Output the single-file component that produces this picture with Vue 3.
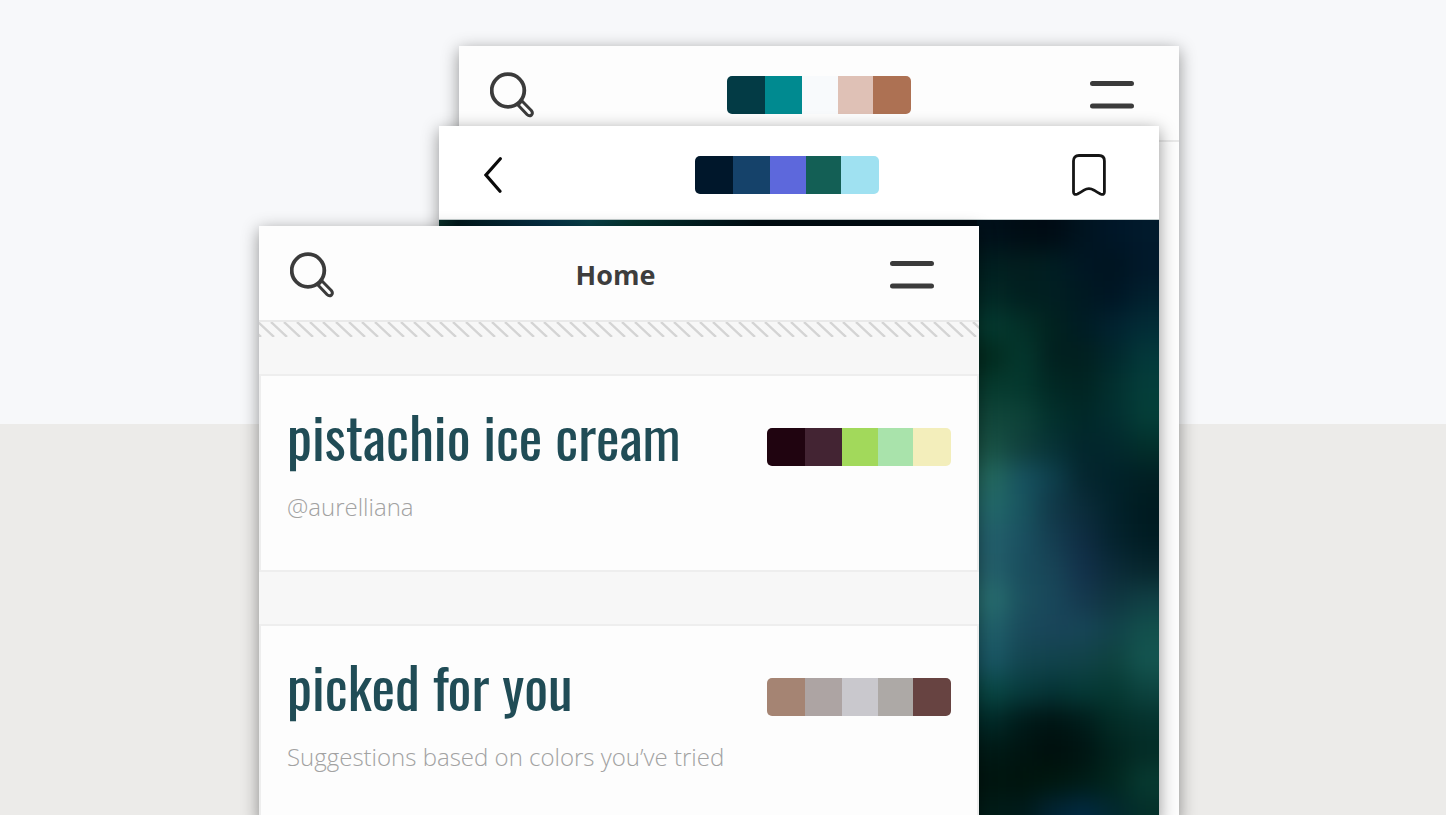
<script setup>
const palettes = {
  desert: ['#033b45', '#008a90', '#f8fafc', '#dfc1b6', '#ad7153'],
  aurora: ['#00172b', '#15426a', '#5d68dc', '#135f55', '#9fe1f1'],
}
const items = [
  { title: 'pistachio ice cream', note: '@aurelliana', colors: ['#200410', '#432433', '#a2d95b', '#a9e3ab', '#f3eebb'] },
  { title: 'picked for you', note: 'Suggestions based on colors you’ve tried', colors: ['#a58473', '#ada4a3', '#c9c8cd', '#ada9a6', '#674341'] },
]
// Colour field of the nebula: 30px cells, blended by a blur.
const field = [
  '00101a 000c14 000b14 001420 001628 011a2c',
  '011f20 021e1e 001e22 001624 001420 01182a',
  '022825 011f1f 011f22 001922 001524 01202e',
  '043a30 033028 01221f 001c24 012230 022c36',
  '022a1e 04382e 01201f 01201f 01272c 03383a',
  '063a2e 04382e 012824 012422 02302f 043e3a',
  '11463a 0d4238 02302c 012828 022e30 043e38',
  '195245 103f3c 073236 02262c 02282d 022f2b',
  '24695f 175260 0e3f4c 05262f 01222a 011f23',
  '23686a 18545f 113848 0b2c3a 02222b 001b20',
  '235f6b 1a5060 143d50 0f2c42 04232e 001c23',
  '245f6a 194d5e 184456 12304a 0b2a38 07262d',
  '286e6f 1b505e 18475a 15384e 0f3540 103f44',
  '20606a 194a5b 194459 174557 12424a 12504c',
  '1a5765 134550 11434c 114248 0e423f 145550',
  '094845 073b3d 053436 053a37 053832 0d4440',
  '012a28 001a19 001413 001c1a 022c26 05322d',
  '001a16 001411 000f0d 001412 01231e 042c26',
  '00150f 00140d 00180f 001c16 01261e 073a31',
  '001c18 001a1a 012434 012a42 02282f 042f29',
]
const cells = field.flatMap((row, r) =>
  row.split(' ').map((c, i, all) => ({
    x: i === 0 ? 440 : 540 + i * 30,
    y: r === 0 ? -60 : r * 30,
    w: i === 0 ? 131 : i === all.length - 1 ? 100 : 31,
    h: r === 0 ? 91 : r === field.length - 1 ? 100 : 31,
    fill: '#' + c,
  }))
)
const widths = [38, 37, 36, 35, 38]
</script>

<template>
  <main class="page">
    <div class="stage">
      <section class="sheet back">
        <header class="bar">
          <button class="icon" aria-label="Search">
            <svg width="44" height="46" viewBox="0 0 44 46" fill="none" stroke="#3b3b3b">
              <circle cx="18" cy="18.500" r="16.300" stroke-width="3.800" />
              <path d="M27.500 32.500L31.500 28.500L41.300 38.500Q43.300 41 41.500 43Q39.300 44.800 37 42.500Z" stroke-width="3" stroke-linejoin="round" />
              <path d="M28.500 29.500L31 32" stroke-width="4" />
            </svg>
          </button>
          <div class="palette">
            <span v-for="(c, i) in palettes.desert" :key="c" :style="{ background: c, flexGrow: widths[i] }"></span>
          </div>
          <button class="icon end" aria-label="Menu">
            <svg width="44" height="28" viewBox="0 0 44 28" stroke="#3b3b3b" stroke-width="5" stroke-linecap="round">
              <path d="M2.500 2.500H41.500M2.500 25H41.500" />
            </svg>
          </button>
        </header>
      </section>

      <section class="sheet middle">
        <header class="bar spread">
          <button class="icon" aria-label="Back">
            <svg width="18" height="36" viewBox="0 0 18 36" fill="none" stroke="#0a0a0a" stroke-width="3.200" stroke-linecap="round">
              <path d="M16.300 1.800L2 18L16 34.200" />
            </svg>
          </button>
          <div class="palette">
            <span v-for="(c, i) in palettes.aurora" :key="c" :style="{ background: c, flexGrow: widths[i] }"></span>
          </div>
          <button class="icon" aria-label="Bookmark">
            <svg width="34" height="42" viewBox="0 0 34 42" fill="none" stroke="#151515" stroke-width="2.800">
              <path d="M7 1.500H27Q32.400 1.500 32.400 7V38Q32.400 41.500 28.500 40Q25 38.200 22 36.200Q16.900 33 12 36.200Q9 38.200 5.500 40Q1.500 41.500 1.500 38V7Q1.500 1.500 7 1.500Z" />
            </svg>
          </button>
        </header>
        <svg class="art" viewBox="0 0 720 595" preserveAspectRatio="xMaxYMin slice" aria-hidden="true">
          <defs>
            <filter id="soft" filterUnits="userSpaceOnUse" x="440" y="-60" width="350" height="730" color-interpolation-filters="sRGB">
              <feGaussianBlur stdDeviation="12" />
            </filter>
            <linearGradient id="rim">
              <stop offset="0" stop-color="#0d3a2e" />
              <stop offset="0.050" stop-color="#01191c" />
              <stop offset="0.210" stop-color="#052f44" />
              <stop offset="0.290" stop-color="#084048" />
              <stop offset="0.370" stop-color="#04342f" />
              <stop offset="0.500" stop-color="#011c20" />
              <stop offset="0.600" stop-color="#000c12" />
              <stop offset="1" stop-color="#000a12" />
            </linearGradient>
          </defs>
          <rect width="720" height="595" fill="#01242b" />
          <g filter="url(#soft)">
            <rect v-for="(g, i) in cells" :key="i" :x="g.x" :y="g.y" :width="g.w" :height="g.h" :fill="g.fill" />
          </g>
          <rect width="540" height="8" fill="url(#rim)" />
        </svg>
      </section>

      <section class="sheet front">
        <header class="bar">
          <button class="icon" aria-label="Search">
            <svg width="44" height="46" viewBox="0 0 44 46" fill="none" stroke="#3b3b3b">
              <circle cx="18" cy="18.500" r="16.300" stroke-width="3.800" />
              <path d="M27.500 32.500L31.500 28.500L41.300 38.500Q43.300 41 41.500 43Q39.300 44.800 37 42.500Z" stroke-width="3" stroke-linejoin="round" />
              <path d="M28.500 29.500L31 32" stroke-width="4" />
            </svg>
          </button>
          <h1>Home</h1>
          <button class="icon end" aria-label="Menu">
            <svg width="44" height="28" viewBox="0 0 44 28" stroke="#3b3b3b" stroke-width="5" stroke-linecap="round">
              <path d="M2.500 2.500H41.500M2.500 25H41.500" />
            </svg>
          </button>
        </header>
        <svg class="hatch" width="100%" height="15" aria-hidden="true">
          <defs>
            <pattern id="stripes" width="13" height="15" patternUnits="userSpaceOnUse">
              <path d="M-14 0L2 15M-1 0L15 15M12 0L28 15" stroke="#d4d4d4" stroke-width="2.400" />
            </pattern>
          </defs>
          <rect width="100%" height="15" fill="url(#stripes)" />
        </svg>
        <div class="feed">
          <article v-for="item in items" :key="item.title" class="entry">
            <div>
              <h2>{{ item.title }}</h2>
              <p>{{ item.note }}</p>
            </div>
            <div class="palette">
              <span v-for="(c, i) in item.colors" :key="c" :style="{ background: c, flexGrow: widths[i] }"></span>
            </div>
          </article>
        </div>
      </section>
    </div>
  </main>
</template>

<style>
body {
  margin: 0;
}
</style>

<style scoped>
.page {
  display: grid;
  grid-template-columns: minmax(0, 259fr) minmax(0, 920px) minmax(0, 267fr);
  height: 100vh;
  overflow: hidden;
  background: linear-gradient(#f7f8fa 52%, #ecebe9 52%);
  font-family: "Open Sans", "Noto Sans", sans-serif;
}
.stage {
  grid-column: 2;
  display: grid;
  min-height: 0;
}
.sheet {
  grid-area: 1 / 1;
  box-sizing: border-box;
  width: 78.261%;
  background: #fdfdfd;
  box-shadow: 0 4px 16px rgba(0, 0, 0, 0.42);
}
.back {
  margin-top: 46px;
  justify-self: end;
}
.middle {
  display: flex;
  flex-direction: column;
  margin: 126px 20px 0 0;
  justify-self: end;
  background: #fff;
}
.front {
  display: flex;
  flex-direction: column;
  margin-top: 226px;
  background: #f7f7f7;
}
.bar {
  display: grid;
  grid-template-columns: 1fr auto 1fr;
  align-items: center;
  height: 90px;
  padding: 4px 45px 0 31px;
  border-bottom: 2px solid #e9e9e9;
  background: #fdfdfd;
}
.back .palette {
  margin-left: 14px;
}
.bar.spread {
  display: flex;
  justify-content: space-between;
  height: 89px;
  padding: 4px 53px 0 45px;
  border-bottom: 1px solid #c4cdcd;
  background: #fff;
}
.icon {
  display: flex;
  padding: 0;
  border: 0;
  background: none;
  cursor: pointer;
}
.end {
  justify-self: end;
}
h1 {
  margin: 0 0 0 7px;
  color: #3d3d3d;
  font-size: 27px;
  font-weight: 700;
  line-height: 40px;
}
.palette {
  display: flex;
  flex: none;
  width: 184px;
  height: 38px;
  border-radius: 5px;
  overflow: hidden;
}
.palette span {
  flex-basis: 0;
}
.art {
  flex: 1;
  width: 100%;
  min-height: 0;
}
.hatch {
  display: block;
  flex: none;
}
.feed {
  display: flex;
  flex-direction: column;
  gap: 52px;
  padding-top: 37px;
}
.entry {
  display: flex;
  justify-content: space-between;
  box-sizing: border-box;
  height: 198px;
  padding: 20px 26px 0;
  border: 2px solid #eeeeee;
  background: #fdfdfd;
}
.entry .palette {
  margin-top: 32px;
}
h2 {
  margin: 0;
  color: #204c56;
  font-family: Oswald, "Liberation Sans Narrow", "Roboto Condensed", "Liberation Sans", sans-serif;
  font-size: 56px;
  font-weight: 400;
  line-height: 80px;
}
p {
  margin: 13px 0 0;
  color: #a2a2a2;
  font-size: 24px;
  font-weight: 300;
  line-height: 36px;
}
</style>
